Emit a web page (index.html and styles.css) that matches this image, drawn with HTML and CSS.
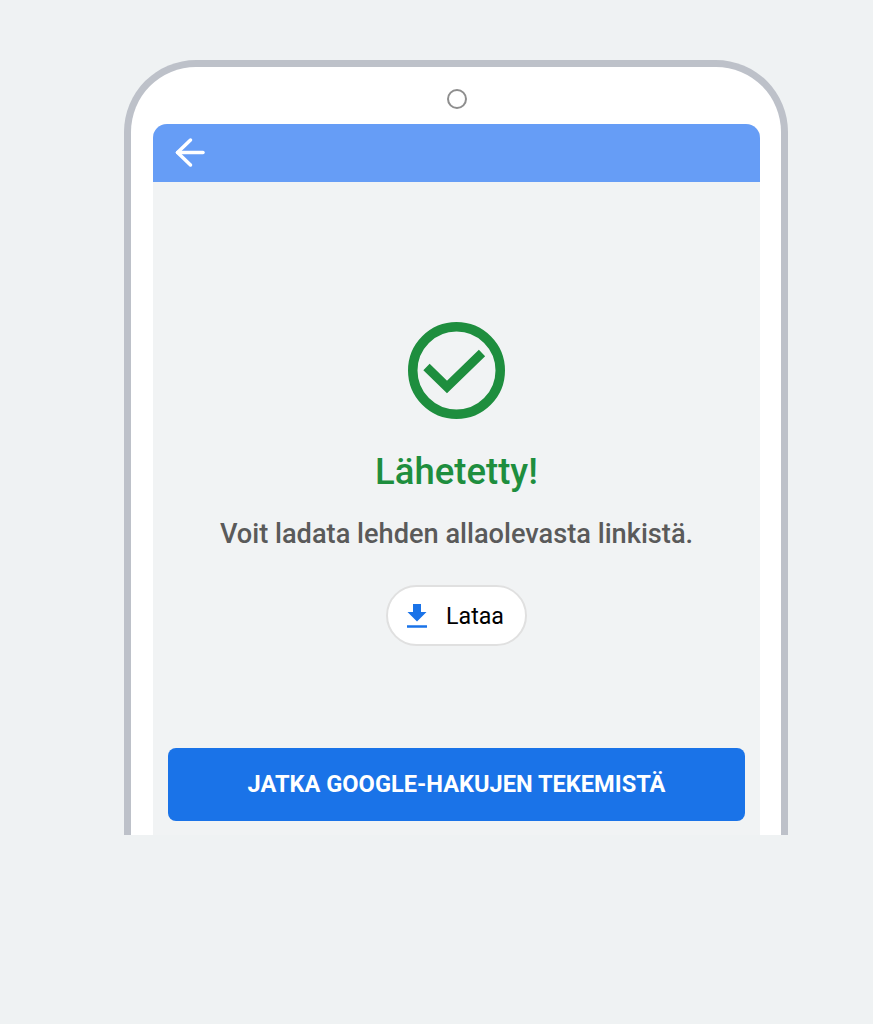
FILE: index.html
```html
<!DOCTYPE html>
<html lang="fi">
<head>
<meta charset="UTF-8">
<title>Lähetetty</title>
<link rel="stylesheet" href="styles.css">
</head>
<body>
<div class="phone">
    <div class="phone-top">
        <div class="camera"></div>
    </div>
    <div class="screen">
        <div class="app-bar">
            <svg class="back-icon" width="32" height="32" viewBox="0 0 32 32" fill="none" stroke="#fff" stroke-width="3.5" stroke-linecap="round" stroke-linejoin="round">
                <path d="M3.5 15.5H29"/>
                <path d="M16.5 3L3.5 15.5L16.5 28"/>
            </svg>
        </div>
        <div class="content">
            <svg class="check-icon" width="97" height="97" viewBox="0 0 97 97" fill="none" stroke="#1e8e3e">
                <circle cx="48.5" cy="48.5" r="43.75" stroke-width="9.5"/>
                <path d="M18.5 45L39 65L74 31" stroke-width="9"/>
            </svg>
            <h1 class="title">Lähetetty!</h1>
            <p class="message">Voit ladata lehden allaolevasta linkistä.</p>
            <button class="download-btn">
                <svg class="download-icon" width="20" height="24" viewBox="0 0 20 24">
                    <path d="M6 0H14V8H19.5L10 17.5L0.5 8H6Z" fill="#1a73e8"/>
                    <path d="M0 22.5H20" stroke="#1a73e8" stroke-width="2.5"/>
                </svg>
                <span>Lataa</span>
            </button>
            <button class="continue-btn">JATKA GOOGLE-HAKUJEN TEKEMISTÄ</button>
        </div>
    </div>
</div>
</body>
</html>
```
FILE: styles.css
```css
body {
    margin: 0;
    height: 1024px;
    overflow: hidden;
    background: #eff2f3;
    font-family: Roboto, "Liberation Sans", sans-serif;
}

.phone {
    box-sizing: border-box;
    width: 664px;
    height: 775px;
    margin: 60px 0 0 124px;
    padding: 0 21px 0 22px;
    background: #fff;
    border: 7px solid #bdc1c9;
    border-bottom: none;
    border-radius: 72px 72px 0 0;
}

.phone-top {
    height: 57px;
    display: flex;
    justify-content: center;
    align-items: center;
    padding-top: 6px;
    box-sizing: border-box;
}

.camera {
    box-sizing: border-box;
    width: 20px;
    height: 20px;
    border: 2px solid #8e8e8e;
    border-radius: 50%;
    margin-left: 1px;
}

.screen {
    height: 711px;
    display: flex;
    flex-direction: column;
    background: #f1f3f4;
    border-radius: 14px 14px 0 0;
    overflow: hidden;
}

.app-bar {
    flex: none;
    height: 58px;
    display: flex;
    align-items: center;
    padding-left: 21px;
    background: #669df6;
}

.content {
    flex: 1;
    display: flex;
    flex-direction: column;
    align-items: center;
    padding: 140px 15px 0;
}

.check-icon {
    flex: none;
}

.title {
    margin: 30px 0 0;
    font-size: 36.5px;
    line-height: 46px;
    font-weight: 500;
    color: #1e8e3e;
}

.message {
    margin: 22px 0 0;
    font-size: 27.2px;
    line-height: 34px;
    font-weight: 500;
    color: #5a5a5a;
}

.download-btn {
    box-sizing: border-box;
    width: 141px;
    height: 61px;
    margin-top: 34px;
    padding: 0 2px 0 0;
    display: flex;
    align-items: center;
    justify-content: center;
    gap: 19px;
    background: #fff;
    border: 2px solid #e0e0e0;
    border-radius: 31px;
    font-family: inherit;
    font-size: 23.2px;
    color: #000;
}

.continue-btn {
    box-sizing: border-box;
    width: 577px;
    height: 73px;
    margin-top: 102px;
    padding: 0 0 2px;
    flex: none;
    background: #1a73e8;
    color: #fff;
    border: none;
    border-radius: 8px;
    font-family: inherit;
    font-size: 23.6px;
    font-weight: 700;
}
```
